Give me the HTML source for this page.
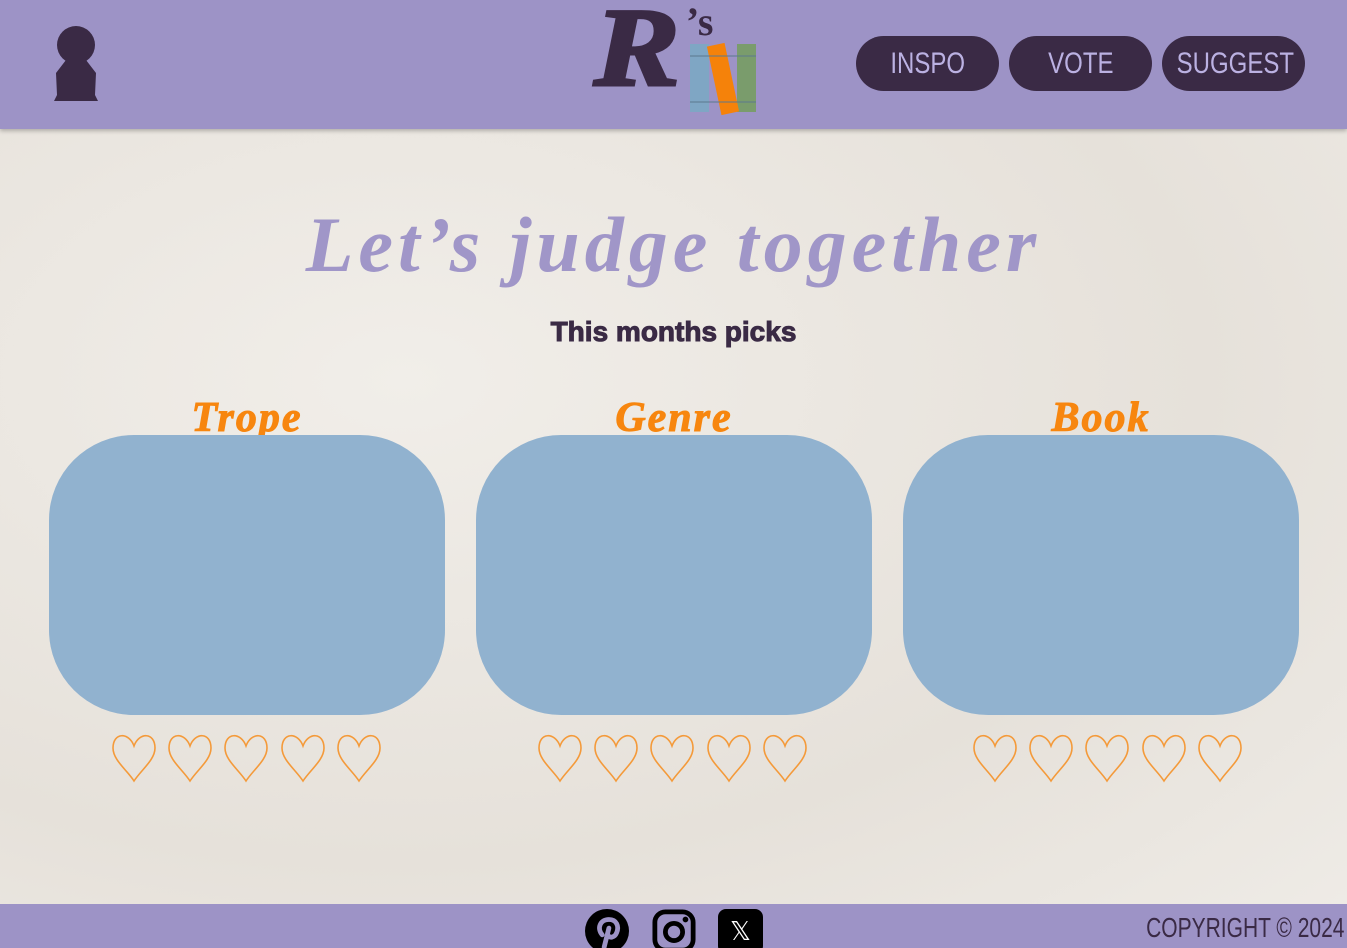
<!DOCTYPE html>
<html><head><meta charset="utf-8"><style>
*{margin:0;padding:0;box-sizing:border-box}
html,body{width:1347px;height:948px;overflow:hidden}
body{position:relative;background:radial-gradient(ellipse at 30% 40%,#f1eee9,#e6e1da 60%,#efece7);font-family:"Liberation Sans",sans-serif}
header{position:absolute;left:0;top:0;width:1347px;height:129px;background:#9d93c6;box-shadow:0 2px 4px rgba(0,0,0,.25)}
footer{position:absolute;left:0;top:904px;width:1347px;height:44px;background:#9d93c6}
.btn{position:absolute;top:36px;width:143px;height:55px;border-radius:28px;background:#3a2a45;color:#bbb1e2;text-align:center;line-height:55px;overflow:hidden}
.btn span{display:inline-block;font-family:"Liberation Sans Narrow","Liberation Sans",sans-serif;font-size:30px;transform:scaleX(.8)}
h1{position:absolute;left:0;width:1347px;top:200px;text-align:center;font-family:"Liberation Serif",serif;font-weight:bold;font-style:italic;font-size:78px;color:#a096c8;letter-spacing:5px}
.sub{position:absolute;left:0;width:1347px;top:316px;text-align:center;font-weight:900;font-size:28px;color:#3a2a45;-webkit-text-stroke:1px #3a2a45}
.lbl{position:absolute;top:394px;width:396px;text-align:center;font-family:"Liberation Serif",serif;font-weight:bold;font-style:italic;font-size:42px;letter-spacing:2px;color:#f7860f;-webkit-text-stroke:1px #f7860f}
.card{position:absolute;top:435px;width:396px;height:280px;border-radius:85px;background:#91b2cf}
.hearts{position:absolute;top:730px}
</style></head><body>
<header>
<svg style="position:absolute;left:54px;top:25px" width="44" height="77" viewBox="0 0 44 77"><circle cx="22" cy="20" r="19" fill="#3a2a45"/><path d="M12 35 L32 35 L42 48 L41 70 L44 76 L0 76 L3 70 L2 48 Z" fill="#3a2a45"/></svg>
<div style="position:absolute;left:594px;top:-8px;font-family:'Liberation Serif',serif;font-weight:bold;font-style:italic;font-size:112px;color:#3a2a45;line-height:1;transform:scaleX(1.15);transform-origin:left;-webkit-text-stroke:3px #3a2a45">R</div>
<div style="position:absolute;left:686px;top:-2px;font-family:'Liberation Serif',serif;font-weight:bold;font-size:40px;color:#3a2a45">’s</div>
<svg style="position:absolute;left:688px;top:42px" width="72" height="74" viewBox="0 0 72 74"><rect x="2" y="2" width="19" height="68" fill="#7fa6c4"/><rect x="49" y="2" width="19" height="68" fill="#7a9c6c"/><rect x="26" y="2" width="18" height="70" fill="#f5820a" transform="rotate(-12 35 37)"/><path d="M2 14H68M2 60H68" stroke="#5d7a8f" stroke-width="2" opacity=".5"/></svg>
<div class="btn" style="left:856px"><span>INSPO</span></div>
<div class="btn" style="left:1009px"><span>VOTE</span></div>
<div class="btn" style="left:1162px"><span>SUGGEST</span></div>
</header>
<h1>Let’s judge together</h1>
<div class="sub">This months picks</div>
<div class="lbl" style="left:49px">Trope</div>
<div class="lbl" style="left:476px">Genre</div>
<div class="lbl" style="left:903px">Book</div>
<div class="card" style="left:49px"></div>
<div class="card" style="left:476px"></div>
<div class="card" style="left:903px"></div>
<svg width="0" height="0" style="position:absolute"><defs><path id="h" d="M23 16 C18 2 2 2 2 18 C2 30 16 40 23 51 C30 40 44 30 44 18 C44 2 28 2 23 16 Z" fill="none" stroke="#f49a3a" stroke-width="1.6"/></defs></svg>
<svg class="hearts" style="left:111px" width="276" height="56"><use href="#h" x="0"/><use href="#h" x="56"/><use href="#h" x="112"/><use href="#h" x="169"/><use href="#h" x="225"/></svg>
<svg class="hearts" style="left:537px" width="276" height="56"><use href="#h" x="0"/><use href="#h" x="56"/><use href="#h" x="112"/><use href="#h" x="169"/><use href="#h" x="225"/></svg>
<svg class="hearts" style="left:972px" width="276" height="56"><use href="#h" x="0"/><use href="#h" x="56"/><use href="#h" x="112"/><use href="#h" x="169"/><use href="#h" x="225"/></svg>
<footer>
<svg style="position:absolute;left:584px;top:5px" width="46" height="44" viewBox="0 0 46 46"><circle cx="23" cy="23" r="23" fill="#000"/><path d="M20 40 L25 20 M18 27 C12 20 16 11 25 11 C33 11 36 18 33 25 C31 30 25 31 24 27" stroke="#9d93c6" stroke-width="5" fill="none" stroke-linecap="round"/></svg>
<svg style="position:absolute;left:651px;top:5px" width="46" height="44" viewBox="0 0 46 46"><rect x="3" y="3" width="40" height="40" rx="11" fill="none" stroke="#000" stroke-width="5"/><circle cx="23" cy="24" r="9" fill="none" stroke="#000" stroke-width="5"/><circle cx="35" cy="11" r="3" fill="#000"/></svg>
<div style="position:absolute;left:718px;top:5px;width:45px;height:45px;border-radius:8px;background:#000;color:#fff;font-size:26px;text-align:center;line-height:44px">𝕏</div>
<div style="position:absolute;right:3px;top:8px;font-family:'Liberation Sans Narrow','Liberation Sans',sans-serif;font-size:28px;color:#3a2a45;transform:scaleX(.75);transform-origin:right;white-space:nowrap">COPYRIGHT © 2024</div>
</footer>
</body></html>
